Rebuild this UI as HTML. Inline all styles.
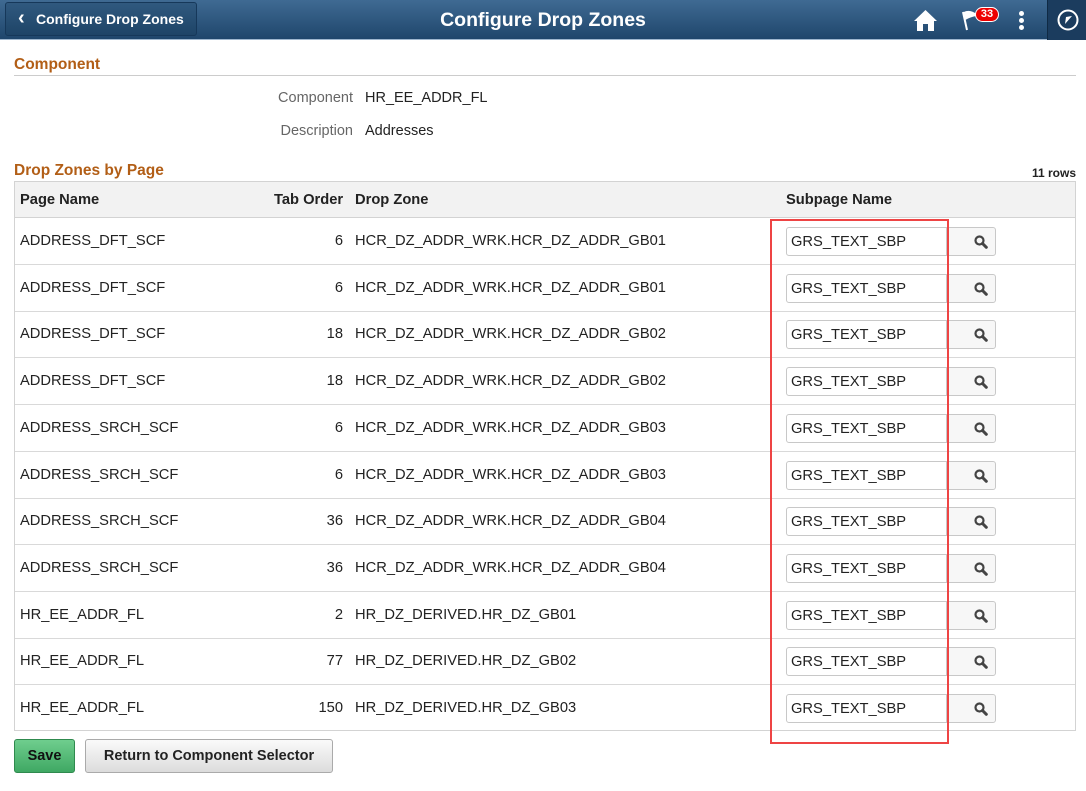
<!DOCTYPE html>
<html><head><meta charset="utf-8"><style>
*{box-sizing:border-box;margin:0;padding:0}
body{width:1086px;height:791px;background:#fff;font-family:"Liberation Sans",Arial,sans-serif;font-size:14.7px;color:#222;position:relative;overflow:hidden}
.hdr{position:absolute;left:0;top:0;width:1086px;height:40px;background:linear-gradient(#3f6a93,#1f466c);border-bottom:1px solid #9fb7cf}
.back{position:absolute;left:5px;top:2px;width:192px;height:34px;border:1px solid #16385a;border-radius:3px;background:linear-gradient(#30597f,#1e4467);color:#fff;font-weight:bold;font-size:14px;line-height:32px;padding-left:30px}
.back:before{content:"‹";position:absolute;left:12px;top:-1px;font-size:20px}
.title{position:absolute;left:0;width:1086px;top:9px;text-align:center;color:#fff;font-weight:bold;font-size:19.5px}
.nav{position:absolute;left:1047px;top:0;width:39px;height:40px;background:#1b3c5e;border-left:1px solid #0f2a44}
.sec{position:absolute;left:14px;color:#b25e16;font-weight:bold;font-size:15.5px}
.lbl{position:absolute;color:#666;text-align:right;width:140px;left:213px;font-size:14.5px}
.val{position:absolute;left:365px;font-size:14.5px}
.tbl{position:absolute;left:14px;top:181px;width:1062px;height:550px;border:1px solid #d3d3d3}
.th{position:absolute;top:0;left:0;width:1060px;height:36px;background:#f2f2f2;border-bottom:1px solid #d3d3d3;font-weight:bold}
.th span,.row span{position:absolute}
.row{position:absolute;left:0;width:1060px;height:47px;border-bottom:1px solid #d9d9d9}
.inp{position:absolute;left:771px;top:9px;width:161px;height:29px;border:1px solid #c8c8c8;border-radius:3px 0 0 3px;padding:6px 0 0 4px;line-height:16px}
.btn{position:absolute;left:931px;top:9px;width:50px;height:29px;border:1px solid #c8c8c8;border-radius:0 3px 3px 0;background:#f7f7f7}
.red{position:absolute;left:770px;top:219px;width:179px;height:525px;border:2px solid #ee4444}
.b{position:absolute;top:739px;height:34px;border-radius:3px;font-weight:bold;text-align:center;line-height:32px;font-size:14.5px}
</style></head><body>
<div class="hdr"><div class="back">Configure Drop Zones</div><div class="title">Configure Drop Zones</div>
<svg style="position:absolute;left:913px;top:9px" width="25" height="23" viewBox="0 0 25 23"><path d="M12.5 1 L1 12 h3 v10 h6 v-7 h5 v7 h6 v-10 h3 Z" fill="#fff"/></svg>
<svg style="position:absolute;left:962px;top:10px" width="16" height="22" viewBox="0 0 16 22"><path d="M1 2 L5 20 M2 3 Q8 0 14 5 Q8 6 3 9" fill="#fff" stroke="#fff" stroke-width="2"/></svg>
<div style="position:absolute;left:975px;top:7px;width:24px;height:15px;background:#e00;border:1px solid #fff;border-radius:8px;color:#fff;font-size:11px;font-weight:bold;text-align:center;line-height:13px">33</div>
<div style="position:absolute;left:1019px;top:11px;width:5px;height:5px;border-radius:3px;background:#fff;box-shadow:0 7px 0 #fff,0 14px 0 #fff"></div>
<div class="nav"><svg style="position:absolute;left:9px;top:9px" width="22" height="22" viewBox="0 0 22 22"><circle cx="11" cy="11" r="9.5" fill="none" stroke="#fff" stroke-width="2"/><path d="M8 15 L9 8 L15 7 Z" fill="#fff"/></svg></div>
</div>
<div class="sec" style="top:56px">Component</div>
<div style="position:absolute;left:14px;top:75px;width:1062px;border-top:1px solid #ccc"></div>
<div class="lbl" style="top:90px">Component</div><div class="val" style="top:90px">HR_EE_ADDR_FL</div>
<div class="lbl" style="top:123px">Description</div><div class="val" style="top:123px">Addresses</div>
<div class="sec" style="top:162px">Drop Zones by Page</div>
<div style="position:absolute;right:10px;top:166px;font-weight:bold;font-size:12px">11 rows</div>
<div class="tbl">
<div class="th"><span style="left:5px;top:10px">Page Name</span><span style="left:259px;top:10px">Tab Order</span><span style="left:340px;top:10px">Drop Zone</span><span style="left:771px;top:10px">Subpage Name</span></div>
<div id="rows"></div>
</div>
<div class="red"></div>
<div class="b" style="left:14px;width:61px;background:linear-gradient(#6fce8e,#3fa863);border:1px solid #2f8a4e;color:#111">Save</div>
<div class="b" style="left:85px;width:248px;background:linear-gradient(#fafafa,#dcdcdc);border:1px solid #aaa;color:#222">Return to Component Selector</div>
<script>
var d=[["ADDRESS_DFT_SCF",6,"GB01"],["ADDRESS_DFT_SCF",6,"GB01"],["ADDRESS_DFT_SCF",18,"GB02"],["ADDRESS_DFT_SCF",18,"GB02"],["ADDRESS_SRCH_SCF",6,"GB03"],["ADDRESS_SRCH_SCF",6,"GB03"],["ADDRESS_SRCH_SCF",36,"GB04"],["ADDRESS_SRCH_SCF",36,"GB04"],["HR_EE_ADDR_FL",2,"H01"],["HR_EE_ADDR_FL",77,"H02"],["HR_EE_ADDR_FL",150,"H03"]];
var h="";d.forEach(function(r,i){var dz=r[2][0]=="G"?"HCR_DZ_ADDR_WRK.HCR_DZ_ADDR_"+r[2]:"HR_DZ_DERIVED.HR_DZ_GB"+r[2].slice(1);
h+='<div class="row" style="top:'+(36+i*46.7)+'px;'+(i==10?'border-bottom:none':'')+'"><span style="left:5px;top:15px">'+r[0]+'</span><span style="right:732px;top:15px">'+r[1]+'</span><span style="left:340px;top:15px">'+dz+'</span><div class="inp">GRS_TEXT_SBP</div><div class="btn"><svg style="position:absolute;left:27px;top:7px" width="14" height="14" viewBox="0 0 14 14"><circle cx="5.5" cy="5.5" r="4" fill="none" stroke="#444" stroke-width="2.2"/><path d="M8.5 8.5 L12.3 12.3" stroke="#444" stroke-width="3" stroke-linecap="round"/></svg></div></div>';});
document.getElementById("rows").innerHTML=h;
</script>
</body></html>
